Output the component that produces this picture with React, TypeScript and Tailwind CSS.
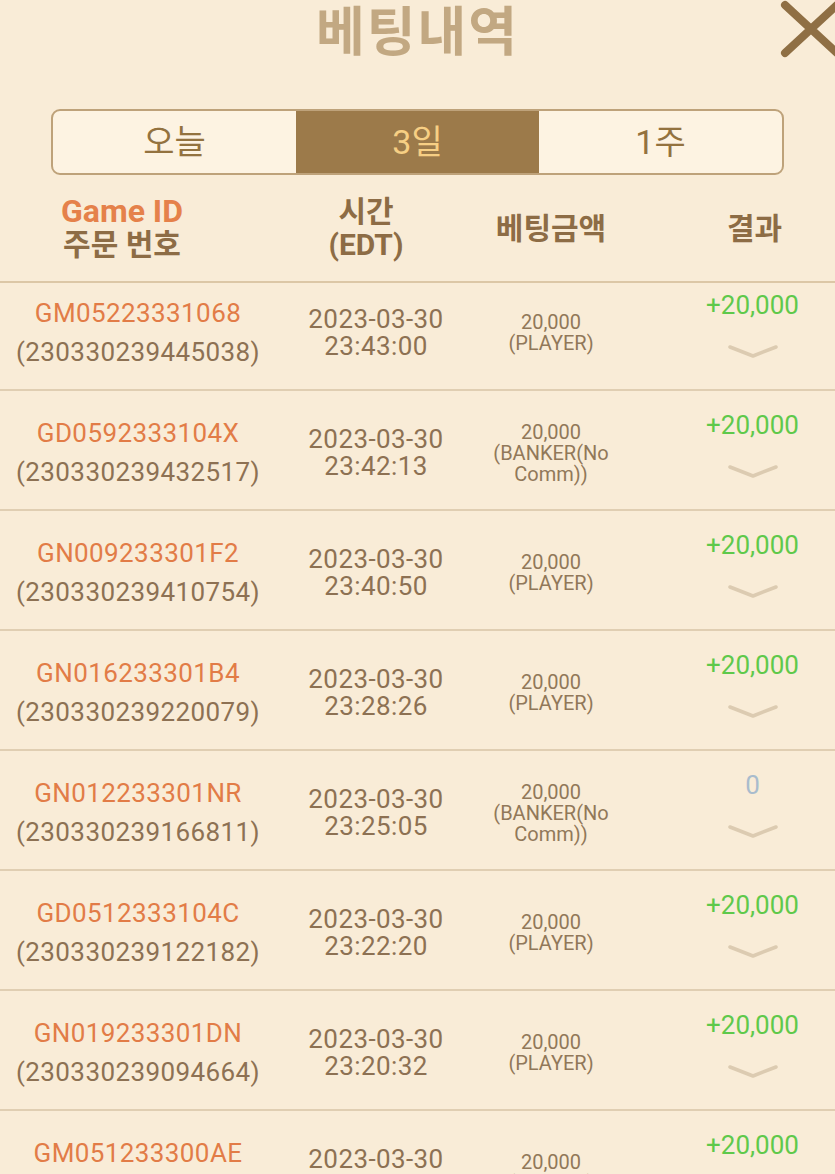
type Row = {
  gameId: string;
  order: string;
  date: string;
  time: string;
  amount: string;
  side: string[];
  result: string;
};

const ROWS: Row[] = [
  { gameId: "GM05223331068", order: "230330239445038", date: "2023-03-30", time: "23:43:00", amount: "20,000", side: ["(PLAYER)"], result: "+20,000" },
  { gameId: "GD0592333104X", order: "230330239432517", date: "2023-03-30", time: "23:42:13", amount: "20,000", side: ["(BANKER(No", "Comm))"], result: "+20,000" },
  { gameId: "GN009233301F2", order: "230330239410754", date: "2023-03-30", time: "23:40:50", amount: "20,000", side: ["(PLAYER)"], result: "+20,000" },
  { gameId: "GN016233301B4", order: "230330239220079", date: "2023-03-30", time: "23:28:26", amount: "20,000", side: ["(PLAYER)"], result: "+20,000" },
  { gameId: "GN012233301NR", order: "230330239166811", date: "2023-03-30", time: "23:25:05", amount: "20,000", side: ["(BANKER(No", "Comm))"], result: "0" },
  { gameId: "GD0512333104C", order: "230330239122182", date: "2023-03-30", time: "23:22:20", amount: "20,000", side: ["(PLAYER)"], result: "+20,000" },
  { gameId: "GN019233301DN", order: "230330239094664", date: "2023-03-30", time: "23:20:32", amount: "20,000", side: ["(PLAYER)"], result: "+20,000" },
  { gameId: "GM051233300AE", order: "230330239071190", date: "2023-03-30", time: "23:18:41", amount: "20,000", side: ["(PLAYER)"], result: "+20,000" },
];

const FONT = { fontFamily: "Roboto, 'Noto Sans CJK KR', sans-serif" };

function Chevron() {
  return (
    <svg width="52" height="16" viewBox="0 0 52 16" className="mt-[22px]">
      <path d="M3 4 L26 13 L49 4" fill="none" stroke="#dccbb1" strokeWidth="3.5" strokeLinecap="round" strokeLinejoin="round" />
    </svg>
  );
}

function BetRow({ row, first }: { row: Row; first: boolean }) {
  const zero = row.result === "0";
  return (
    <div className={`flex items-end border-b-2 border-[#e0ceb2] ${first ? "h-[108px]" : "h-[120px]"}`}>
      <div className="flex h-[112px] w-full items-center">
        <div className="flex w-[276px] flex-col items-center text-[26px] leading-[39px] tracking-[0.4px]">
          <span className="text-[#e27c47]">{row.gameId}</span>
          <span className="text-[#8d7153]">({row.order})</span>
        </div>
        <div className="flex w-[200px] flex-col items-center text-[26px] leading-[27px] tracking-[0.4px] text-[#8d7153]">
          <span>{row.date}</span>
          <span>{row.time}</span>
        </div>
        <div className="flex w-[150px] flex-col items-center text-center text-[20px] leading-[21px] text-[#917859]">
          <span>{row.amount}</span>
          {row.side.map((s) => (
            <span key={s}>{s}</span>
          ))}
        </div>
        <div className="flex flex-1 flex-col items-center self-start pl-[44px] pt-[12px]">
          <span className={`text-[26px] leading-[32px] ${zero ? "text-[#a9bccd]" : "text-[#5fc94b]"}`}>{row.result}</span>
          <Chevron />
        </div>
      </div>
    </div>
  );
}

export default function App() {
  return (
    <div className="relative h-[1174px] w-[835px] overflow-hidden bg-[#f9ecd7]" style={FONT}>
      {/* title bar */}
      <div className="relative flex h-[64px] items-center justify-center">
        <h1 className="mt-[2px] text-[53px] font-bold leading-none tracking-[2px] text-[#c2a882]">베팅내역</h1>
        <svg className="absolute right-[-10px] top-[0px]" width="66" height="58" viewBox="0 0 66 58">
          <path d="M6 5 L58 53 M58 5 L6 53" stroke="#8f6f44" strokeWidth="8" strokeLinecap="round" />
        </svg>
      </div>

      {/* period tabs */}
      <div className="mx-[51px] mt-[45px] flex h-[66px] overflow-hidden rounded-[9px] border-2 border-[#bea27a] bg-[#fdf3e2] text-[34px]">
        <button className="flex-1 text-[#93723f]">오늘</button>
        <button className="flex-1 bg-[#9c7a4a] text-[#f7cf84]">3일</button>
        <button className="flex-1 text-[#93723f]">1주</button>
      </div>

      {/* table header */}
      <div className="flex h-[108px] items-center border-b-2 border-[#dcc7a6] font-bold text-[30px] leading-[33px] text-[#8d6c45]">
        <div className="flex w-[276px] flex-col items-center pr-[32px]">
          <span className="text-[32px] text-[#e5814a]">Game ID</span>
          <span>주문 번호</span>
        </div>
        <div className="flex w-[180px] flex-col items-center">
          <span>시간</span>
          <span>(EDT)</span>
        </div>
        <div className="flex w-[190px] justify-center">베팅금액</div>
        <div className="flex flex-1 justify-center pl-[28px]">결과</div>
      </div>

      {ROWS.map((r, i) => (
        <BetRow key={r.gameId} row={r} first={i === 0} />
      ))}
    </div>
  );
}
